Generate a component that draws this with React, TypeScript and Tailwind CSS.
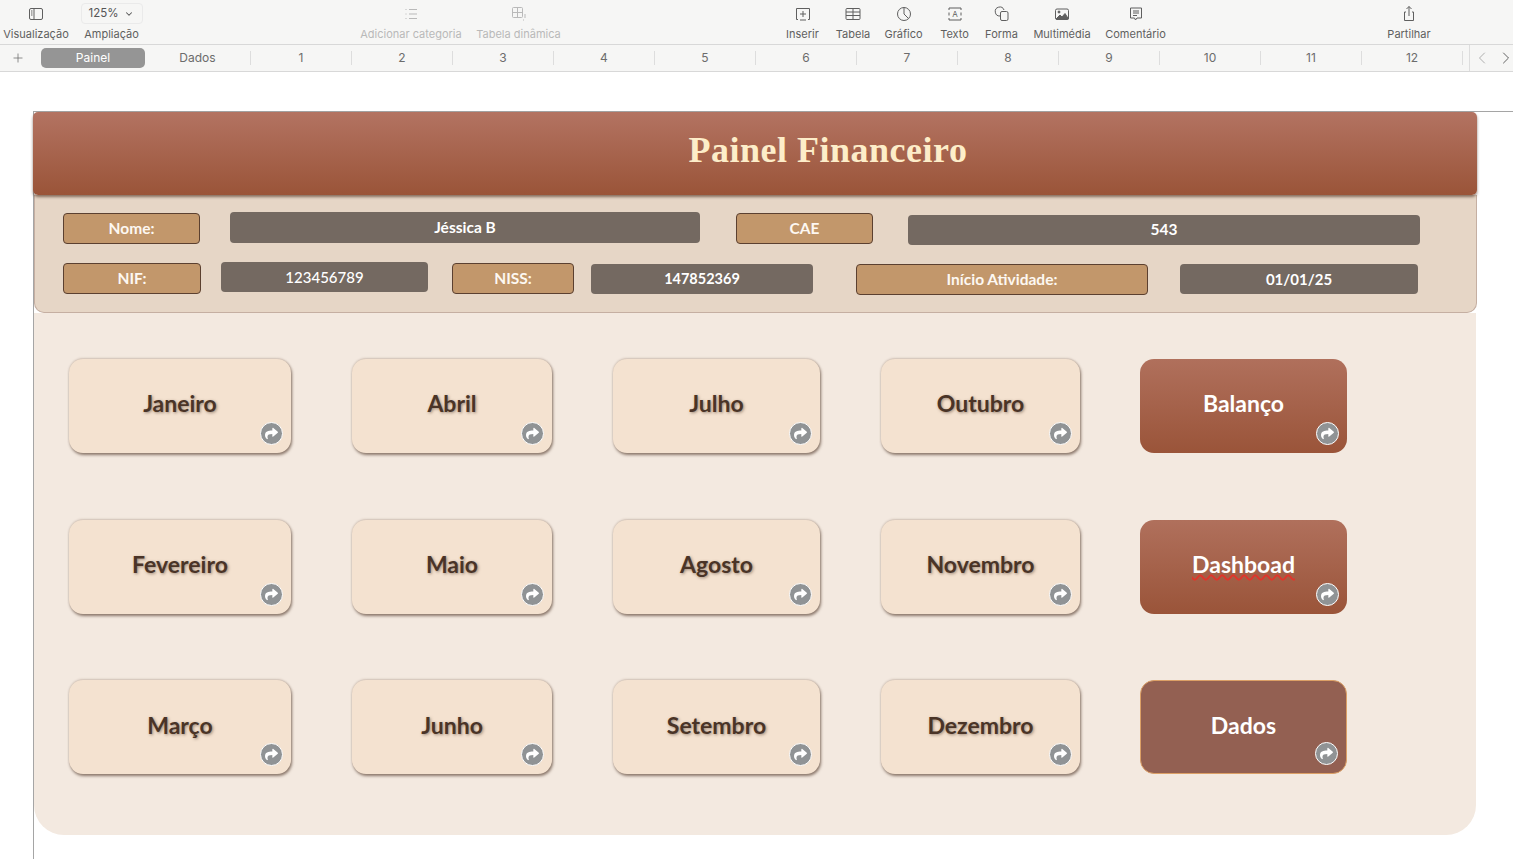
import { FaShare } from 'react-icons/fa'
import { ChevronDown, ChevronLeft, ChevronRight, Plus } from 'lucide-react'
import type { ReactNode } from 'react'

const TAB_NUMBERS = ['1', '2', '3', '4', '5', '6', '7', '8', '9', '10', '11', '12']

const ROWS = [
  ['Janeiro', 'Abril', 'Julho', 'Outubro'],
  ['Fevereiro', 'Maio', 'Agosto', 'Novembro'],
  ['Março', 'Junho', 'Setembro', 'Dezembro'],
]

function Svg({ children }: { children: ReactNode }) {
  return (
    <svg width="18" height="18" viewBox="0 0 18 18" fill="none" stroke="currentColor" strokeWidth="1">
      {children}
    </svg>
  )
}

function ToolItem({ label, icon, className, muted }: { label: string; icon: ReactNode; className: string; muted?: boolean }) {
  return (
    <div className={`flex flex-col items-center shrink-0 ${className} ${muted ? 'text-[#b9b9b9]' : 'text-[#5f5f5f]'}`}>
      <div className="h-[26px] flex items-center justify-center">{icon}</div>
      <div className="text-[11px] leading-[14px] whitespace-nowrap">{label}</div>
    </div>
  )
}

function Toolbar() {
  return (
    <div className="h-[45px] bg-[#f6f6f5] border-b border-[#d8d8d8] flex pl-[3px] pt-[1px]">
      <ToolItem className="w-[66px]" label="Visualização" icon={
        <Svg><rect x="2.5" y="3.5" width="13" height="11" rx="1.5" /><path d="M7 3.5v11M4 6h1.5M4 8h1.5M4 10h1.5" /></Svg>
      } />
      <ToolItem className="w-[55px] ml-[15px]" label="Ampliação" icon={
        <div className="w-[62px] h-[21px] -mt-[1px] rounded-[4px] border border-[#eaeaea] flex items-center justify-center gap-[6px] text-[11.5px] text-[#555]">
          125% <ChevronDown size={10} strokeWidth={2.5} />
        </div>
      } />
      <ToolItem muted className="w-[102px] ml-[221px]" label="Adicionar categoria" icon={
        <Svg><path d="M7 4.500h8M7 9h8M7 13.500h8M3.500 4.500h1M3.500 9h1M3.500 13.500h1" /></Svg>
      } />
      <ToolItem muted className="w-[85px] ml-[14px]" label="Tabela dinâmica" icon={
        <Svg><rect x="2.500" y="2.500" width="10" height="10" rx="1" /><path d="M7.500 2.500v10M2.500 7.500h10M15 9v4M13 15h1" /></Svg>
      } />
      <ToolItem className="w-[33px] ml-[225px]" label="Inserir" icon={
        <Svg><path d="M4 14.500H2.500v-11h13v11H14" /><path d="M9 6v6M6 9h6M6 15h6" /></Svg>
      } />
      <ToolItem className="w-[34px] ml-[17px]" label="Tabela" icon={
        <Svg><rect x="2" y="3.500" width="14" height="11" rx="1" /><path d="M2 7h14M2 10.500h14M9 3.500v11" /></Svg>
      } />
      <ToolItem className="w-[39px] ml-[14px]" label="Gráfico" icon={
        <Svg><circle cx="9" cy="9" r="6.500" /><path d="M9 2.500V9l4.500 4.500" /></Svg>
      } />
      <ToolItem className="w-[29px] ml-[17px]" label="Texto" icon={
        <Svg>
          <path d="M3 5V3h12v2M3 13v2h12v-2M3 7.500v3M15 7.500v3" />
          <text x="9" y="11.500" fontSize="8" textAnchor="middle" fill="currentColor" stroke="none" fontFamily="Inter, sans-serif">A</text>
        </Svg>
      } />
      <ToolItem className="w-[33px] ml-[16px]" label="Forma" icon={
        <Svg><path d="M7 11A4.500 4.500 0 1 1 11 5" /><rect x="7.500" y="6.500" width="7.500" height="9" rx="1.500" /></Svg>
      } />
      <ToolItem className="w-[58px] ml-[15px]" label="Multimédia" icon={
        <Svg>
          <rect x="2.500" y="4" width="13" height="10.500" rx="1.500" />
          <circle cx="6" cy="7" r="1" fill="currentColor" />
          <path d="M3 14l4-4 2 2 3-3.500 3.500 5.500z" fill="currentColor" />
        </Svg>
      } />
      <ToolItem className="w-[61px] ml-[14px]" label="Comentário" icon={
        <Svg><path d="M3.500 3h11v10H10l-1.500 2-1-2H3.500z" /><path d="M6 6h6M6 8h6M6 10.500h4" /></Svg>
      } />
      <ToolItem className="w-[44px] ml-[221px]" label="Partilhar" icon={
        <Svg><path d="M6 7H4.500v8.500h9V7H12M9 11V1.500M6.500 4L9 1.500 11.500 4" /></Svg>
      } />
    </div>
  )
}

function TabBar() {
  return (
    <div className="h-[27px] bg-[#f6f6f5] border-b border-[#d8d8d8] flex items-center text-[12px] text-[#6c6c6c]">
      <div className="w-[36px] pl-[11px] shrink-0 -mt-[1px]">
        <Plus size={14} strokeWidth={1.25} className="text-[#666]" />
      </div>
      <div className="w-[104px] h-[20px] ml-[5px] shrink-0 rounded-[5px] bg-[#959595] text-white flex items-center justify-center">
        Painel
      </div>
      <div className="w-[105px] h-[18px] shrink-0 flex items-center justify-center">Dados</div>
      {TAB_NUMBERS.map((n) => (
        <div key={n} className="w-[101px] h-[14px] shrink-0 border-l border-[#dddddd] flex items-center justify-center">
          {n}
        </div>
      ))}
      <div className="h-[14px] border-l border-[#dddddd] shrink-0 w-[7px]" />
      <div className="h-[26px] flex-1 border-l border-[#dddddd] flex items-center pl-[2px] gap-[4px]">
        <ChevronLeft size={20} strokeWidth={1} className="text-[#a0a0a0]" />
        <ChevronRight size={20} strokeWidth={1} className="text-[#444]" />
      </div>
    </div>
  )
}

function Label({ text, className }: { text: string; className: string }) {
  return (
    <div className={`h-[31px] shrink-0 rounded-[4px] border border-[#5b4030] bg-[#c2976b] text-[#fdf8f2] text-[15.5px] font-bold flex items-center justify-center ${className}`}>
      {text}
    </div>
  )
}

function Value({ text, className }: { text: string; className: string }) {
  return (
    <div className={`h-[30px] shrink-0 rounded-[4px] bg-[#746961] text-white text-[15.5px] font-bold flex items-center justify-center ${className}`}>
      {text}
    </div>
  )
}

function InfoPanel() {
  return (
    <div className="h-[118px] w-[1443px] bg-[#e6d6c6] border border-t-0 border-[#c5afa2] rounded-b-[10px] pl-[28px]">
      <div className="flex items-start pt-[18px]">
        <Label text="Nome:" className="w-[137px]" />
        <Value text="Jéssica B" className="w-[470px] ml-[30px] h-[31px] -mt-[1px]" />
        <Label text="CAE" className="w-[137px] ml-[36px]" />
        <Value text="543" className="w-[512px] ml-[35px] mt-[2px] h-[29px]" />
      </div>
      <div className="flex items-start mt-[18px]">
        <Label text="NIF:" className="w-[138px]" />
        <Value text="123456789" className="w-[207px] ml-[20px] -mt-[1px] !font-medium !text-[15px]" />
        <Label text="NISS:" className="w-[122px] ml-[24px]" />
        <Value text="147852369" className="w-[222px] ml-[17px] mt-[1px] !text-[14.5px]" />
        <Label text="Início Atividade:" className="w-[292px] ml-[43px] mt-[1px]" />
        <Value text="01/01/25" className="w-[238px] ml-[32px] mt-[1px] !text-[15px]" />
      </div>
    </div>
  )
}

function ArrowBadge() {
  return (
    <div className="absolute right-[8.5px] bottom-[8px] w-[23px] h-[23px] rounded-full bg-[#909395] border border-white flex items-center justify-center">
      <FaShare size={13} className="text-white" />
    </div>
  )
}

function MonthCard({ name }: { name: string }) {
  return (
    <div className="relative h-[94px] rounded-[14px] bg-[#f4e2d0] shadow-[1px_2px_3px_rgba(70,45,30,0.6),0_-1px_2px_rgba(120,90,70,0.25)] flex items-center justify-center pb-[5px]">
      <span className="font-bold text-[#4a3427] text-[23px] [text-shadow:1px_1px_3px_rgba(70,45,30,0.5)]">{name}</span>
      <ArrowBadge />
    </div>
  )
}

function ActionCard({ name, className, wavy }: { name: string; className: string; wavy?: boolean }) {
  return (
    <div className={`relative h-[94px] -ml-px rounded-[14px] flex items-center justify-center pb-[5px] ${className}`}>
      <span className={`font-bold text-white text-[23px] ${wavy ? 'underline decoration-wavy decoration-[#e0352b] decoration-[1.5px] underline-offset-1' : ''}`}>{name}</span>
      <ArrowBadge />
    </div>
  )
}

const ACTIONS = [
  { name: 'Balanço', className: 'bg-gradient-to-b from-[#b0705c] to-[#9a5439]' },
  { name: 'Dashboad', className: 'bg-gradient-to-b from-[#b0705c] to-[#9a5439]', wavy: true },
  { name: 'Dados', className: 'bg-[#936052] border border-[#dca066]' },
]

export default function App() {
  return (
    <div className="h-[859px] overflow-hidden bg-white font-['Inter','Liberation_Sans',sans-serif]">
      <Toolbar />
      <TabBar />
      <div className="mt-[39px] ml-[33px] h-[748px] border-l border-t border-[#a5a5a5] font-['Lato','Open_Sans',sans-serif]">
        <div className="w-[1444px] h-[83px] -ml-[1px] rounded-[5px] bg-gradient-to-b from-[#b37362] to-[#9a5438] shadow-[0_2px_3px_rgba(70,40,25,0.6)] relative flex items-center justify-center pl-[146px] pb-[7px]">
          <span className="font-['Liberation_Serif',serif] font-bold text-[36px] tracking-[0.5px] text-[#fdedc9]">Painel Financeiro</span>
        </div>
        <InfoPanel />
        <div className="w-[1442px] h-[522px] bg-[#f3e9e0] rounded-b-[30px] pt-[46px] pl-[35px]">
          <div className="grid grid-cols-[222px_200px_207px_199px_206px] gap-x-[61px] gap-y-[66.7px]">
            {ROWS.map((row, i) => (
              <div key={i} className="contents">
                {row.map((name) => (
                  <MonthCard key={name} name={name} />
                ))}
                <ActionCard {...ACTIONS[i]} />
              </div>
            ))}
          </div>
        </div>
      </div>
    </div>
  )
}
